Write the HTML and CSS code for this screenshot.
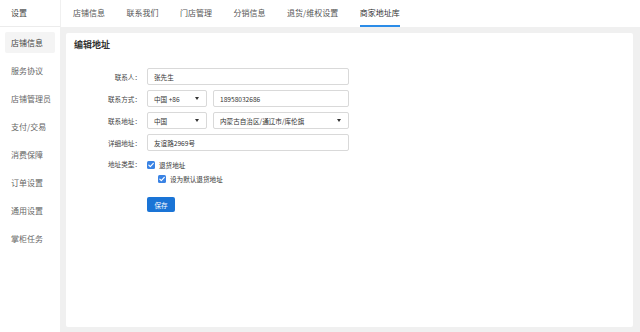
FILE: index.html
```html
<!DOCTYPE html>
<html lang="zh-CN">
<head>
<meta charset="utf-8">
<title>商家地址库</title>
<link rel="stylesheet" href="styles.css">
</head>
<body>
<div class="app">
  <aside class="side">
    <div class="side-head">设置</div>
    <ul class="side-menu">
      <li class="side-item active">店铺信息</li>
      <li class="side-item">服务协议</li>
      <li class="side-item">店铺管理员</li>
      <li class="side-item">支付/交易</li>
      <li class="side-item">消费保障</li>
      <li class="side-item">订单设置</li>
      <li class="side-item">通用设置</li>
      <li class="side-item">掌柜任务</li>
    </ul>
  </aside>
  <div class="main">
    <nav class="tabs">
      <span class="tab">店铺信息</span>
      <span class="tab">联系我们</span>
      <span class="tab">门店管理</span>
      <span class="tab">分销信息</span>
      <span class="tab">退货/维权设置</span>
      <span class="tab active">商家地址库</span>
    </nav>
    <div class="content">
      <section class="card">
        <h2 class="card-title">编辑地址</h2>
        <form class="form">
          <div class="row">
            <label class="label">联系人：</label>
            <div class="field input wide">张先生</div>
          </div>
          <div class="row">
            <label class="label">联系方式：</label>
            <div class="field select short"><span>中国 +86</span><svg class="caret" viewBox="0 0 4 3"><path d="M0 0h4L2 3z"/></svg></div>
            <div class="field input mid">18958032686</div>
          </div>
          <div class="row">
            <label class="label">联系地址：</label>
            <div class="field select short"><span>中国</span><svg class="caret" viewBox="0 0 4 3"><path d="M0 0h4L2 3z"/></svg></div>
            <div class="field select mid"><span>内蒙古自治区/通辽市/库伦旗</span><svg class="caret" viewBox="0 0 4 3"><path d="M0 0h4L2 3z"/></svg></div>
          </div>
          <div class="row">
            <label class="label">详细地址：</label>
            <div class="field input wide">友谊路2969号</div>
          </div>
          <div class="row row-check">
            <label class="label">地址类型：</label>
            <div class="checks">
              <div class="check"><span class="box"><svg viewBox="0 0 8 8"><path d="M1.8 4.1l1.5 1.5 3-3.2" fill="none" stroke="#fff" stroke-width="1.2" stroke-linecap="round" stroke-linejoin="round"/></svg></span>退货地址</div>
              <div class="check sub"><span class="box"><svg viewBox="0 0 8 8"><path d="M1.8 4.1l1.5 1.5 3-3.2" fill="none" stroke="#fff" stroke-width="1.2" stroke-linecap="round" stroke-linejoin="round"/></svg></span>设为默认退货地址</div>
            </div>
          </div>
          <div class="row row-btn">
            <span class="label"></span>
            <button type="button" class="btn">保存</button>
          </div>
        </form>
      </section>
    </div>
  </div>
</div>
</body>
</html>
```

FILE: styles.css
```css
* { box-sizing: border-box; margin: 0; padding: 0; }
html, body { width: 640px; height: 332px; overflow: hidden; }
body {
  background: #f0f0f0;
  font-family: "Noto Sans CJK SC", "Liberation Sans", sans-serif;
  color: #333;
}
.app {
  display: flex;
  height: 332px;
}
.side {
  width: 60px;
  flex: none;
  background: #fff;
}
.side-head {
  height: 27px;
  line-height: 26px;
  padding-left: 11px;
  font-size: 8px;
  color: #444;
  border-bottom: 1px solid #ececec;
}
.side-menu {
  list-style: none;
  padding: 5px 5px 0;
}
.side-item {
  height: 21px;
  line-height: 21px;
  margin-bottom: 7px;
  padding-left: 6px;
  font-size: 8px;
  color: #666;
  border-radius: 2px;
}
.side-item.active {
  background: #f4f4f4;
  color: #444;
}
.main {
  flex: 1;
  display: flex;
  flex-direction: column;
}
.tabs {
  height: 27px;
  background: #fff;
  border-left: 1px solid #f0f0f0;
  display: flex;
  gap: 21.5px;
  padding-left: 12px;
}
.tab {
  font-size: 8px;
  line-height: 25px;
  height: 27px;
  color: #555;
  border-bottom: 2px solid transparent;
  white-space: nowrap;
}
.tab.active {
  color: #333;
  border-bottom-color: #2b8ce8;
}
.content {
  flex: 1;
  padding: 6px 7px 5px 6px;
  display: flex;
}
.card {
  flex: 1;
  background: #fff;
  border-radius: 2px;
  padding: 6px 8px 0;
}
.card-title {
  font-size: 9px;
  line-height: 12px;
  font-weight: 700;
  color: #333;
}
.form {
  margin-top: 17px;
}
.row {
  display: flex;
  align-items: center;
  gap: 6px;
  height: 17px;
  margin-bottom: 5px;
}
.label {
  width: 67px;
  flex: none;
  text-align: right;
  font-size: 6.6px;
  color: #444;
}
.field {
  height: 17px;
  border: 1px solid #d9d9d9;
  border-radius: 2px;
  font-size: 6.6px;
  color: #333;
  display: flex;
  align-items: center;
  padding: 0 6px;
  white-space: nowrap;
}
.wide { width: 202px; }
.short { width: 60px; }
.mid { width: 136px; }
.select { justify-content: space-between; }
.caret {
  width: 4px;
  height: 3px;
  fill: #333;
  margin-right: 1px;
}
.row-check {
  height: auto;
  align-items: flex-start;
  margin-bottom: 0;
}
.row-check .label {
  line-height: 17px;
}
.checks {
  display: flex;
  flex-direction: column;
}
.check {
  display: flex;
  align-items: center;
  gap: 4px;
  font-size: 6.6px;
  color: #333;
  height: 17px;
}
.check.sub {
  margin-left: 11px;
  height: 11px;
}
.box {
  width: 8px;
  height: 8px;
  border-radius: 1.5px;
  background: #3a83e4;
  display: flex;
}
.box svg { width: 8px; height: 8px; }
.row-btn {
  margin-top: 13px;
  height: 15px;
}
.btn {
  width: 28px;
  height: 15px;
  border: none;
  border-radius: 2px;
  background: #1a74d6;
  color: #fff;
  font-family: inherit;
  font-size: 6.6px;
}
```
